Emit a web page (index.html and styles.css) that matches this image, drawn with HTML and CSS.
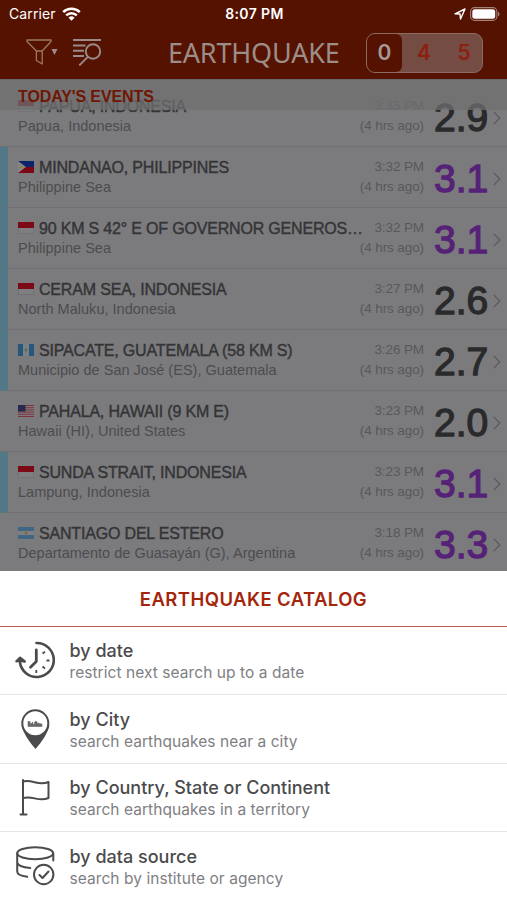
FILE: index.html
```html
<!DOCTYPE html>
<html lang="en">
<head>
<meta charset="utf-8">
<title>Earthquake</title>
<link rel="stylesheet" href="styles.css">
</head>
<body>
<svg class="defs" width="0" height="0" aria-hidden="true">
  <symbol id="id" viewBox="0 0 16 12"><path fill="#7f7f82" d="M0 0h16v12H0z"/><path fill="#7b0916" d="M0 0h16v6H0z"/><path fill="none" stroke="#666" stroke-width=".6" d="M.3 6v5.7h15.4V6"/></symbol>
  <symbol id="ph" viewBox="0 0 16 12"><path fill="#0d2468" d="M0 0h16v6H0z"/><path fill="#7b0916" d="M0 6h16v6H0z"/><path fill="#85858a" d="M0 0l8 6-8 6z"/><circle cx="2.7" cy="6" r="1.3" fill="#94812b"/></symbol>
  <symbol id="gt" viewBox="0 0 16 12"><path fill="#7c8083" d="M0 0h16v12H0z"/><path fill="#28577c" d="M0 0h5v12H0zM11 0h5v12h-5z"/><circle cx="8" cy="6" r="1.5" fill="#5c6b50"/></symbol>
  <symbol id="us" viewBox="0 0 16 12"><path fill="#807a7d" d="M0 0h16v12H0z"/><path stroke="#7b3440" stroke-width="1" d="M0 .5h16M0 2.7h16M0 4.9h16M0 7.1h16M0 9.3h16M0 11.5h16"/><path fill="#27294f" d="M0 0h7.5v6.5H0z"/></symbol>
  <symbol id="ar" viewBox="0 0 16 12"><path fill="#7c8083" d="M0 0h16v12H0z"/><path fill="#406684" d="M0 0h16v4H0zM0 8h16v4H0z"/><circle cx="8" cy="6" r="1.3" fill="#80641f"/></symbol>
  <symbol id="chev" viewBox="0 0 8 14"><path fill="none" stroke="#59595c" stroke-width="1.2" d="M.8.8 6.8 7 .8 13.2"/></symbol>
</svg>
<div class="phone">
  <header class="top">
    <div class="status">
      <div class="carrier"><span>Carrier</span>
        <svg width="19" height="14" viewBox="0 0 19 14"><g fill="none" stroke="#fff" stroke-width="2.5"><path d="M1.2 5.2a11.8 11.8 0 0 1 16.6 0"/><path d="M4.2 8.4a7.6 7.6 0 0 1 10.6 0"/></g><path fill="#fff" d="M9.5 13.8 6.5 10.7a4.3 4.3 0 0 1 6 0z"/></svg>
      </div>
      <div class="clock">8:07 PM</div>
      <div class="power">
        <svg width="12" height="12" viewBox="0 0 12 12"><path fill="none" stroke="#fff" stroke-width="1.4" stroke-linejoin="round" d="M1 5.8 11 1 6.5 11 6 6z"/></svg>
        <svg width="30" height="14" viewBox="0 0 30 14"><rect x=".6" y=".6" width="26.3" height="12.8" rx="4" fill="none" stroke="#a38279" stroke-width="1.1"/><rect x="2.3" y="2.3" width="22.9" height="9.4" rx="2.5" fill="#fff"/><path fill="#a38279" d="M28 4.7c2 .8 2 3.8 0 4.6z"/></svg>
      </div>
    </div>
    <div class="nav">
      <div class="tools">
        <svg width="32" height="28" viewBox="0 0 32 28"><path fill="none" stroke="#9a7a61" stroke-width="1.3" stroke-linejoin="round" d="M1 1h24v1.5l-8.800 9.500v13l-5.800-3.500V12L1 2.500zM10.400 12h5.800"/><path fill="#9a8a88" d="M25.500 10h6l-3 6z"/></svg>
        <svg width="30" height="28" viewBox="0 0 30 28"><g fill="none" stroke="#9a8a88" stroke-width="1.9"><path d="M1 1h28M1 6.500h12.500M1 11.700h11M1 17h11"/><circle cx="21" cy="12.500" r="7.200"/><path d="m15.800 17.800-8.500 8.500"/></g></svg>
      </div>
      <h1>EARTHQUAKE</h1>
      <div class="segments"><span class="on">0</span><span>4</span><span>5</span></div>
    </div>
  </header>

  <main class="feed">
    <h2 class="section">TODAY'S EVENTS</h2>
    <ul class="events">
      <li class="event"><div class="place"><div class="name"><svg class="flag"><use href="#id"/></svg><b>PAPUA, INDONESIA</b></div><p>Papua, Indonesia</p></div><div class="when"><p>3:35 PM</p><p>(4 hrs ago)</p></div><div class="mag">2.9</div><svg class="chev"><use href="#chev"/></svg></li>
      <li class="event sea"><div class="place"><div class="name"><svg class="flag"><use href="#ph"/></svg><b>MINDANAO, PHILIPPINES</b></div><p>Philippine Sea</p></div><div class="when"><p>3:32 PM</p><p>(4 hrs ago)</p></div><div class="mag strong">3.1</div><svg class="chev"><use href="#chev"/></svg></li>
      <li class="event sea"><div class="place"><div class="name"><svg class="flag"><use href="#id"/></svg><b>90 KM S 42° E OF GOVERNOR GENEROS…</b></div><p>Philippine Sea</p></div><div class="when"><p>3:32 PM</p><p>(4 hrs ago)</p></div><div class="mag strong">3.1</div><svg class="chev"><use href="#chev"/></svg></li>
      <li class="event sea"><div class="place"><div class="name"><svg class="flag"><use href="#id"/></svg><b>CERAM SEA, INDONESIA</b></div><p>North Maluku, Indonesia</p></div><div class="when"><p>3:27 PM</p><p>(4 hrs ago)</p></div><div class="mag">2.6</div><svg class="chev"><use href="#chev"/></svg></li>
      <li class="event sea"><div class="place"><div class="name"><svg class="flag"><use href="#gt"/></svg><b>SIPACATE, GUATEMALA (58 KM S)</b></div><p>Municipio de San José (ES), Guatemala</p></div><div class="when"><p>3:26 PM</p><p>(4 hrs ago)</p></div><div class="mag">2.7</div><svg class="chev"><use href="#chev"/></svg></li>
      <li class="event"><div class="place"><div class="name"><svg class="flag"><use href="#us"/></svg><b>PAHALA, HAWAII (9 KM E)</b></div><p>Hawaii (HI), United States</p></div><div class="when"><p>3:23 PM</p><p>(4 hrs ago)</p></div><div class="mag">2.0</div><svg class="chev"><use href="#chev"/></svg></li>
      <li class="event sea"><div class="place"><div class="name"><svg class="flag"><use href="#id"/></svg><b>SUNDA STRAIT, INDONESIA</b></div><p>Lampung, Indonesia</p></div><div class="when"><p>3:23 PM</p><p>(4 hrs ago)</p></div><div class="mag strong">3.1</div><svg class="chev"><use href="#chev"/></svg></li>
      <li class="event"><div class="place"><div class="name"><svg class="flag"><use href="#ar"/></svg><b>SANTIAGO DEL ESTERO</b></div><p>Departamento de Guasayán (G), Argentina</p></div><div class="when"><p>3:18 PM</p><p>(4 hrs ago)</p></div><div class="mag strong">3.3</div><svg class="chev"><use href="#chev"/></svg></li>
    </ul>
  </main>

  <section class="sheet">
    <h2>EARTHQUAKE CATALOG</h2>
    <div class="option">
      <svg width="42" height="42" viewBox="0 0 42 42"><g fill="none" stroke="#4b4b4d"><path stroke-width="2.600" stroke-linecap="round" d="M22.500 4a17 17 0 1 1-16.600 19"/><path stroke-width="2.600" stroke-linejoin="round" stroke-linecap="round" d="m2.500 22.300 3.500-3.500 4.700 3.700-5-1z"/><path stroke-width="2.800" stroke-linecap="round" stroke-linejoin="round" d="M22.300 11v11.500l-5.800 5.800"/><path stroke-width="1.800" d="m28.500 14.500 2.500-1.800M32.500 21.500h3M28.500 27.500l2.500 2M22.300 31v3"/></g></svg>
      <div><h3>by date</h3><p>restrict next search up to a date</p></div>
    </div>
    <div class="option">
      <svg width="42" height="42" viewBox="0 0 42 42"><path fill="#4b4b4d" d="M7.500 17.500h28Q33 28 21.500 41 10 28 7.500 17.500z"/><circle cx="21.300" cy="15.300" r="13" fill="#fff" stroke="#4b4b4d" stroke-width="2"/><path fill="#68686a" stroke="#68686a" stroke-width=".6" d="M14 18.500v-5h2v2h2v-1h1v2h1.500v-2l1.500-1.500 1.300 1.500v1.500l1.500-1 1.200 1 1-.5 1 1v2z"/></svg>
      <div><h3>by City</h3><p>search earthquakes near a city</p></div>
    </div>
    <div class="option">
      <svg width="42" height="42" viewBox="0 0 42 42"><path fill="none" stroke="#4b4b4d" stroke-width="2" stroke-linecap="round" stroke-linejoin="round" d="M9 4v34M6.500 38.500h6M9 5.500c10-2.500 15 5 25.500.500v16C24 26.500 19 19 9 22"/></svg>
      <div><h3>by Country, State or Continent</h3><p>search earthquakes in a territory</p></div>
    </div>
    <div class="option">
      <svg width="42" height="42" viewBox="0 0 42 42"><g fill="none" stroke="#4b4b4d" stroke-width="2" stroke-linecap="round" stroke-linejoin="round"><ellipse cx="21.200" cy="8.300" rx="18" ry="6"/><path d="M3.200 8.500v18q0 4 10 5.300M3.200 17.500q1 4.500 13 5.500M39.300 8.500v7"/><circle cx="29.700" cy="29.500" r="9.700"/><path d="m25.500 30 3 3 6-6.500"/></g></svg>
      <div><h3>by data source</h3><p>search by institute or agency</p></div>
    </div>
  </section>
</div>
</body>
</html>
```
FILE: styles.css
```css
* { box-sizing: border-box; margin: 0; padding: 0; }
body { width: 507px; height: 900px; overflow: hidden; font-family: "Liberation Sans", Arial, sans-serif; }
.defs { display: block; height: 0; }
.phone { width: 507px; height: 900px; display: flex; flex-direction: column; background: #fff; }
.top { height: 79px; background: #551200; flex: none; }

.status { height: 27px; padding: 0 7px 0 9px; display: grid; grid-template-columns: 1fr auto 1fr; align-items: center; color: #fff; font: 400 14px/27px Inter, sans-serif; }
.carrier { display: flex; align-items: center; gap: 6px; letter-spacing: .1px; }
.clock { font-weight: 600; letter-spacing: .4px; }
.power { display: flex; justify-content: flex-end; align-items: center; gap: 4px; }

.nav { height: 52px; padding: 0 24px 0 26px; display: grid; grid-template-columns: 142px 1fr 117px; align-items: center; }
.tools { display: flex; gap: 14px; }
.nav h1 { font: 400 27px/50px "Noto Sans", sans-serif; letter-spacing: -.2px; color: #9c8d89; white-space: nowrap; }
.segments { height: 40px; border: 1.500px solid #8c6a61; border-radius: 9px; background: #754c43; display: grid; grid-template-columns: 35px 44px 1fr; overflow: hidden; color: #8c2010; font: 600 21px/37px Inter, sans-serif; text-align: center; }
.segments .on { background: #551200; color: #a39a98; border-radius: 6px; }

.feed { position: relative; height: 492px; flex: none; overflow: hidden; background: #7b7b7d; }
.section { position: absolute; top: 0; left: 0; width: 100%; height: 31px; padding-left: 18px; background: rgba(111, 111, 112, .75); border-top: 1px solid #68686a; font-size: 16px; line-height: 33px; font-weight: 700; letter-spacing: -.1px; color: #6f1605; }
.events { list-style: none; padding-top: 7px; }
.event { height: 61px; border-bottom: 1px solid #717173; display: grid; grid-template-columns: 343px 63px 57px 9px; align-items: start; padding: 10px 0 0 18px; color: #4c4c4e; }
.event.sea { border-left: 8px solid #527786; padding-left: 10px; }
.place { white-space: nowrap; }
.name { display: flex; align-items: center; gap: 5px; height: 20px; }
.name b { font-weight: 400; font-size: 16px; line-height: 20px; padding-top: 1px; letter-spacing: -.18px; color: #343436; -webkit-text-stroke: .4px #343436; }
.flag { width: 16px; height: 12px; flex: none; }
.place p { font-size: 14.500px; line-height: 20px; letter-spacing: .02px; }
.when { font-size: 13.500px; line-height: 20px; letter-spacing: -.1px; text-align: right; white-space: nowrap; justify-self: end; color: #58585b; }
.mag { font-size: 39px; line-height: 44px; padding: 0 0 0 10px; color: #2a2a2c; -webkit-text-stroke: 1.300px currentColor; }
.mag.strong { color: #562277; }
.chev { width: 8px; height: 14px; margin: 15px 0 0 12px; }

.sheet { flex: 1; background: #fff; font-family: Inter, sans-serif; }
.sheet h2 { height: 55.500px; border-bottom: 1.500px solid #b55c4d; text-align: center; font-size: 18.500px; line-height: 57px; letter-spacing: .42px; font-weight: 600; color: #a3260b; }
.option { height: 68.500px; border-bottom: 1px solid #e5e5e6; padding-left: 14px; display: flex; align-items: center; gap: 13.500px; }
.option > div { padding-top: 2px; }
.option:last-child { border: 0; }
.option h3 { font-size: 18px; line-height: 23px; font-weight: 500; color: #4b4b4d; }
.option p { font-size: 15.500px; line-height: 21px; letter-spacing: .06px; color: #808083; }
```
